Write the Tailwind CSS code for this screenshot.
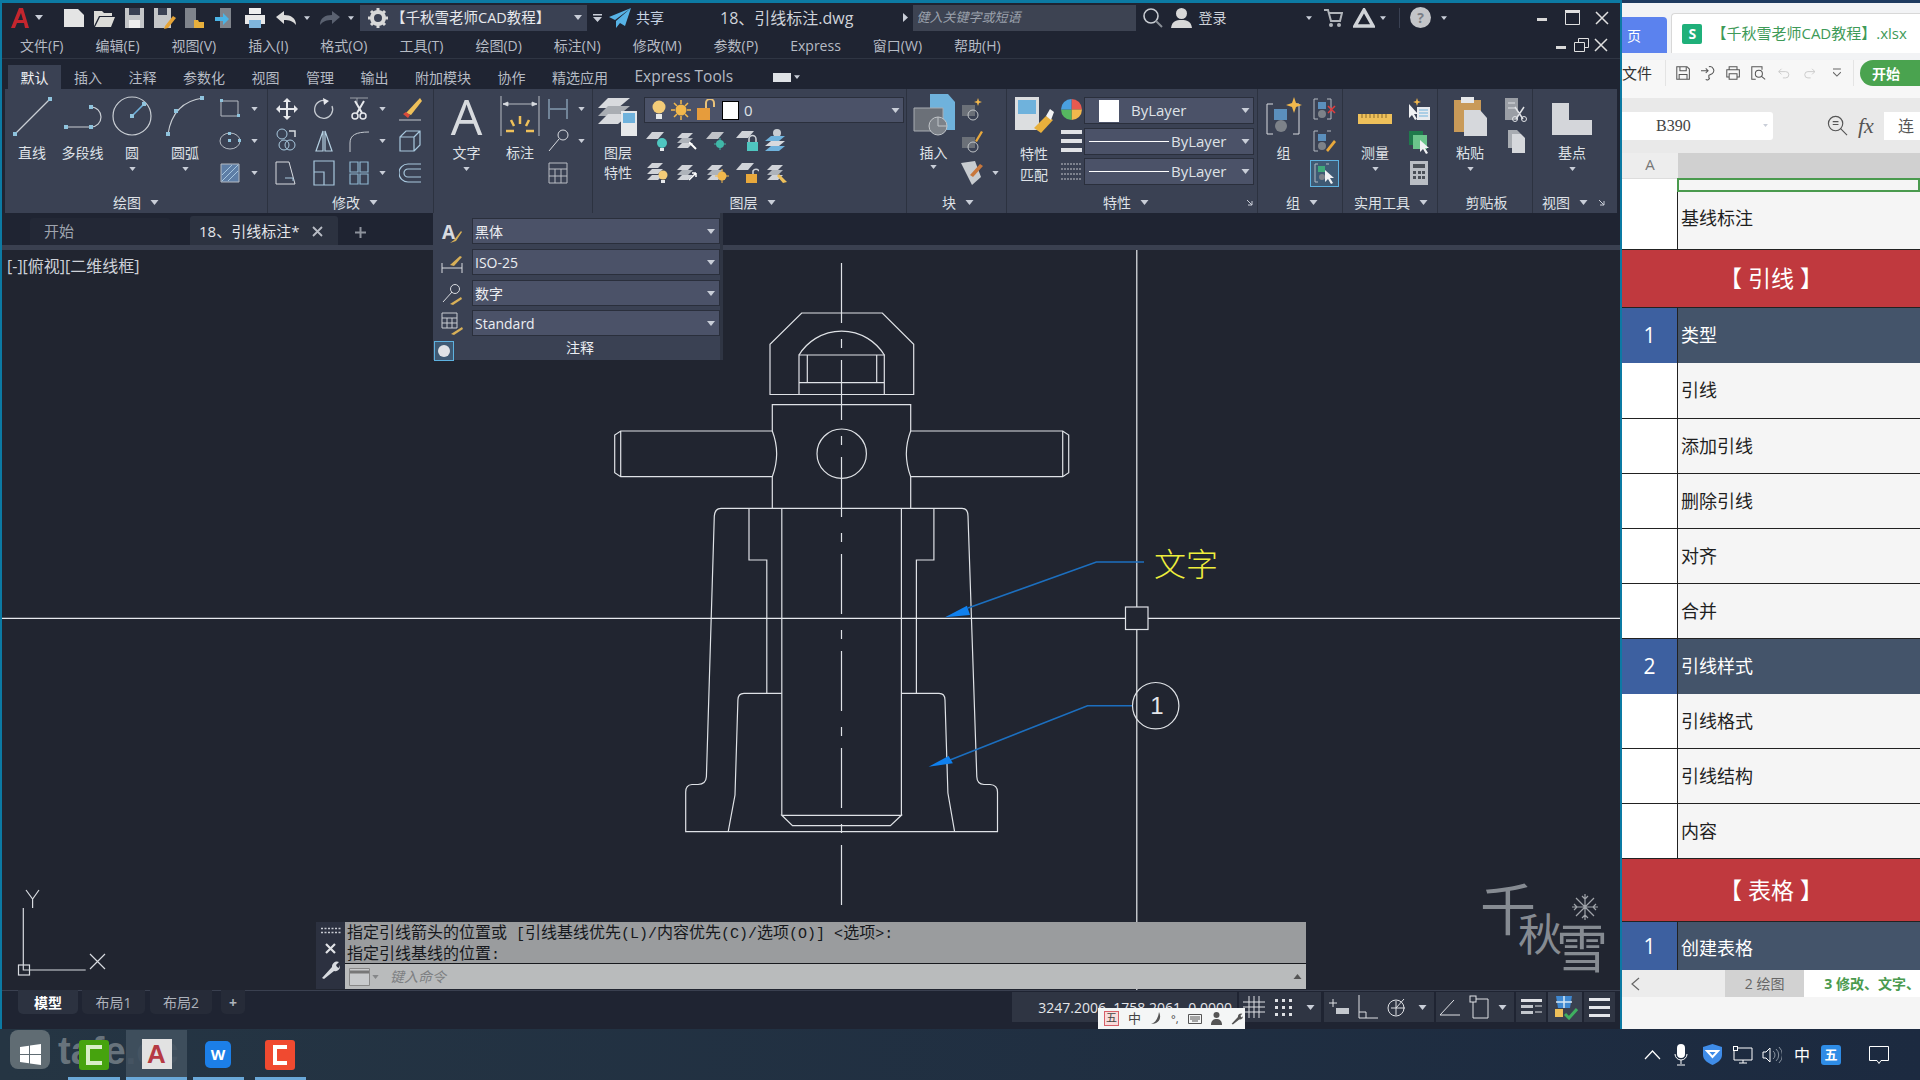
<!DOCTYPE html>
<html lang="zh-CN">
  <head>
    <meta charset="UTF-8" />
    <title>18、引线标注.dwg</title>
    <script src="https://cdn.jsdelivr.net/npm/@tailwindcss/browser@4"></script>
  </head>
  <body class="w-[1920px] h-[1080px] overflow-hidden bg-[#1f2432] [font-family:'Open_Sans','Noto_Sans_CJK_SC',sans-serif]">
    <!-- shared small glyphs -->
    <svg class="hidden">
      <symbol id="tri" viewBox="0 0 8 5"><path d="M0 0h8L4 5z" fill="#c9ced8" /></symbol>
      <symbol id="node" viewBox="0 0 4 4"><rect width="4" height="4" fill="#8fc3dd" /></symbol>
      <symbol id="layers" viewBox="0 0 24 24">
        <path d="M7 5h11l-5 5H2z" fill="#d0d3d8" /><path d="M7 10h11l-5 5H2z" fill="#aeb3ba" /><path d="M7 15h11l-5 5H2z" fill="#d0d3d8" />
      </symbol>
    </svg>

    <div class="flex h-[1029px]">
      <!-- CAD window -->
      <div class="relative w-[1622px] flex flex-col bg-[#1f2432] border-t-[3px] border-x-2 border-[#0c7aa3] text-[#cfd3da]">
        <!-- title row -->
        <div class="h-[29px] flex items-center text-[14px] shrink-0">
          <svg class="w-[20px] h-[22px] ml-[8px]" viewBox="0 0 20 22"><path d="M1 21 9 1h4l6 20h-4l-1-5H7l-2 5zM8 13h5l-2-7z" fill="#c4262e" /></svg>
          <svg class="w-[8px] h-[5px] ml-[5px]"><use href="#tri" /></svg>
          <svg class="w-[22px] h-[20px] ml-[20px]" viewBox="0 0 22 20"><path d="M1 1h14l6 6v12H1z" fill="#e4e4e4" /></svg>
          <svg class="w-[22px] h-[20px] ml-[8px]" viewBox="0 0 22 20"><path d="M1 3h8l2 2h8v3H6L1 18zM7 9h15l-4 10H2z" fill="#dcdcd8" /></svg>
          <svg class="w-[21px] h-[22px] ml-[9px]" viewBox="0 0 21 22"><path d="M1 1h19v20H1z" fill="#c4c6c8" /><path d="M5 1h11v7H5z" fill="#3a4153" /><path d="M5 13h11v8H5z" fill="#eee" /></svg>
          <svg class="w-[23px] h-[22px] ml-[8px]" viewBox="0 0 23 22"><path d="M1 1h17v20H1z" fill="#c4c6c8" /><path d="M5 1h9v7H5z" fill="#3a4153" /><path d="M12 19l8-10 3 2-8 10-4 1z" fill="#e6a436" /></svg>
          <svg class="w-[21px] h-[22px] ml-[8px]" viewBox="0 0 21 22"><path d="M1 1h11v20H1z" fill="#7f848c" /><path d="M10 13h4l1 2h5v6H10z" fill="#e8b03c" /></svg>
          <svg class="w-[21px] h-[22px] ml-[9px]" viewBox="0 0 21 22"><path d="M6 1h11v20H6z" fill="#7f848c" /><path d="M1 10h8V6l6 6-6 6v-4H1z" fill="#4bb4e6" /></svg>
          <svg class="w-[22px] h-[22px] ml-[9px]" viewBox="0 0 22 22"><path d="M5 1h12v6H5z" fill="#eee" /><path d="M1 8h20v9H1z" fill="#e8e8e8" /><path d="M5 13h12v8H5z" fill="#7fb5dc" /></svg>
          <svg class="w-[22px] h-[16px] ml-[9px]" viewBox="0 0 22 16"><path d="M9 1v4c7 0 12 3 12 10-3-4-7-5-12-5v4L1 7z" fill="#dcdcdc" /></svg>
          <svg class="w-[6px] h-[4px] ml-[7px]"><use href="#tri" /></svg>
          <svg class="w-[22px] h-[16px] ml-[9px]" viewBox="0 0 22 16"><path d="M13 1v4C6 5 1 8 1 15c3-4 7-5 12-5v4l8-7z" fill="#5a6170" /></svg>
          <svg class="w-[6px] h-[4px] ml-[7px]"><use href="#tri" /></svg>
          <div class="w-[227px] h-[26px] ml-[6px] flex items-center bg-[#3a4153] text-[#e6e8ec]">
            <svg class="w-[20px] h-[20px] ml-[8px]" viewBox="0 0 20 20"><circle cx="10" cy="10" r="6" fill="none" stroke="#d8d8d8" stroke-width="4" /><path d="M10 0v4M10 16v4M0 10h4M16 10h4M3 3l3 3M14 14l3 3M3 17l3-3M14 6l3-3" stroke="#d8d8d8" stroke-width="3" /></svg>
            <span class="ml-[3px] w-[177px] text-[14.500px] whitespace-nowrap">【千秋雪老师CAD教程】</span>
            <svg class="w-[8px] h-[5px] ml-[6px]"><use href="#tri" /></svg>
          </div>
          <svg class="w-[9px] h-[8px] ml-[6px]" viewBox="0 0 9 8"><path d="M0 0h9v1.500H0zM0 3h9L4.500 8z" fill="#c9ced8" /></svg>
          <svg class="w-[22px] h-[20px] ml-[7px]" viewBox="0 0 22 20"><path d="M22 0 0 9l6 3zM22 0 7 13v7l4-5 5 3z" fill="#57b3e6" /></svg>
          <span class="ml-[5px] text-[#c8d4e4]">共享</span>
          <span class="ml-[56px] text-[16px] whitespace-nowrap">18、引线标注.dwg</span>
          <svg class="w-[5px] h-[9px] ml-[50px]" viewBox="0 0 5 9"><path d="M0 0l5 4.500L0 9z" fill="#c9ced8" /></svg>
          <div class="w-[223px] h-[26px] ml-[5px] flex items-center pl-[3px] bg-[#3d4352] text-[13px] italic text-[#9aa0ab]">健入关键字或短语</div>
          <svg class="w-[21px] h-[21px] ml-[6px]" viewBox="0 0 21 21"><circle cx="9" cy="9" r="7" fill="none" stroke="#c8ccd2" stroke-width="1.600" /><path d="M14 14l6 6" stroke="#8a8f96" stroke-width="2" /></svg>
          <svg class="w-[21px] h-[22px] ml-[8px]" viewBox="0 0 21 22"><circle cx="10.500" cy="6.500" r="5.500" fill="#d8d8d8" /><path d="M0 21c1-7 5-8 10.500-8S20 14 21 21z" fill="#d8d8d8" /></svg>
          <span class="ml-[6px]">登录</span>
          <svg class="w-[6px] h-[4px] ml-[80px]"><use href="#tri" /></svg>
          <svg class="w-[19px] h-[20px] ml-[12px]" viewBox="0 0 19 20"><path d="M0 2h4l3 11h9l2-8H5" fill="none" stroke="#b0b4ba" stroke-width="2" /><circle cx="7" cy="17" r="2" fill="#b0b4ba" /><circle cx="15" cy="17" r="2" fill="#b0b4ba" /></svg>
          <svg class="w-[22px] h-[20px] ml-[10px]" viewBox="0 0 22 20"><path d="M11 2 2 18h18z" fill="none" stroke="#d0d3d8" stroke-width="3.500" /></svg>
          <svg class="w-[6px] h-[4px] ml-[5px]"><use href="#tri" /></svg>
          <div class="w-px h-[20px] ml-[13px] bg-[#3a4153]"></div>
          <svg class="w-[21px] h-[21px] ml-[10px]" viewBox="0 0 21 21"><circle cx="10.500" cy="10.500" r="10.500" fill="#c3c5c8" /><text x="10.500" y="15.500" text-anchor="middle" font-size="14" font-weight="700" fill="#7b7f86">?</text></svg>
          <svg class="w-[6px] h-[4px] ml-[10px]"><use href="#tri" /></svg>
          <svg class="w-[10px] h-[3px] ml-[90px] mt-[4px]" viewBox="0 0 10 3"><rect width="10" height="3" fill="#d8d8d8" /></svg>
          <svg class="w-[15px] h-[15px] ml-[18px]" viewBox="0 0 15 15"><path d="M.5 2.500h14v12H.5z" fill="none" stroke="#e0e0e0" /><rect width="15" height="2.500" fill="#e0e0e0" /></svg>
          <svg class="w-[14px] h-[14px] ml-[15px]" viewBox="0 0 14 14"><path d="M1 1l12 12M13 1 1 13" stroke="#e0e0e0" stroke-width="1.500" /></svg>
        </div>

        <!-- menu row -->
        <div class="h-[27px] flex items-center text-[14px] text-[#b6bbc4] border-b border-[#2f3543] shrink-0">
          <div class="flex gap-[32px] ml-[18px] whitespace-nowrap">
            <span>文件(F)</span><span>编辑(E)</span><span>视图(V)</span><span>插入(I)</span><span>格式(O)</span><span>工具(T)</span><span>绘图(D)</span><span>标注(N)</span><span>修改(M)</span><span>参数(P)</span><span>Express</span><span>窗口(W)</span><span>帮助(H)</span>
          </div>
          <svg class="w-[10px] h-[3px] ml-[555px] mt-[5px]" viewBox="0 0 10 3"><rect width="10" height="3" fill="#d8d8d8" /></svg>
          <svg class="w-[15px] h-[14px] ml-[8px]" viewBox="0 0 15 14"><path d="M.5 4.500h10v9H.5zM4.500 4.500V.5h10v9h-4" fill="none" stroke="#e0e0e0" /></svg>
          <svg class="w-[14px] h-[14px] ml-[5px]" viewBox="0 0 14 14"><path d="M1 1l12 12M13 1 1 13" stroke="#e0e0e0" stroke-width="1.500" /></svg>
        </div>

        <!-- ribbon tabs -->
        <div class="h-[30px] flex items-end text-[14px] text-[#b6bbc4] shrink-0">
          <span class="ml-[6px] h-[24px] w-[53px] flex items-center justify-center bg-[#3a4153] text-[#f0f1f4]">默认</span>
          <div class="flex items-center gap-[26.500px] ml-[13px] h-[24px] whitespace-nowrap">
            <span>插入</span><span>注释</span><span>参数化</span><span>视图</span><span>管理</span><span>输出</span><span>附加模块</span><span>协作</span><span>精选应用</span><span class="text-[15.500px]">Express Tools</span>
          </div>
          <div class="h-[24px] flex items-center ml-[40px] gap-[3px]">
            <div class="w-[18px] h-[9px] bg-[#dfe2e6]"></div>
            <svg class="w-[6px] h-[4px]"><use href="#tri" /></svg>
          </div>
        </div>

        <!-- ribbon -->
        <div class="h-[124px] flex pl-[3px] text-[14px] text-[#dfe2e7] shrink-0">
          <!-- 绘图 -->
          <section class="w-[263px] flex flex-col bg-[#3a4153] border-r border-[#2c3240]">
            <div class="h-[102px] pt-[4px] flex">
              <div class="w-[54px] flex flex-col items-center">
                <svg class="w-[40px] h-[40px] mt-[3px] mb-[7px]" viewBox="0 0 40 40"><path d="M3 38 38 3" stroke="#c9ced4" stroke-width="1.200" /><use href="#node" x="1" y="36" width="4" height="4" /><use href="#node" x="36" y="1" width="4" height="4" /></svg>
                <span class="leading-[20px]">直线</span>
              </div>
              <div class="w-[47px] flex flex-col items-center">
                <svg class="w-[40px] h-[40px] mt-[3px] mb-[7px]" viewBox="0 0 40 40"><path d="M3 31H28A10 10 0 0 0 28 11" fill="none" stroke="#c9ced4" stroke-width="1.200" /><use href="#node" x="1" y="29" width="4" height="4" /><use href="#node" x="26" y="29" width="4" height="4" /><use href="#node" x="26" y="9" width="4" height="4" /></svg>
                <span class="leading-[20px] whitespace-nowrap">多段线</span>
              </div>
              <div class="w-[52px] flex flex-col items-center">
                <svg class="w-[40px] h-[40px] mt-[3px] mb-[7px]" viewBox="0 0 40 40"><circle cx="20" cy="20" r="19" fill="none" stroke="#c9ced4" stroke-width="1.200" /><path d="M20 20 32 8" stroke="#6fb2dc" stroke-width="1.600" /><use href="#node" x="18" y="18" width="4" height="4" /><use href="#node" x="30" y="6" width="4" height="4" /></svg>
                <span class="leading-[20px]">圆</span>
                <svg class="w-[7px] h-[4px] mt-[4px]"><use href="#tri" /></svg>
              </div>
              <div class="w-[54px] flex flex-col items-center">
                <svg class="w-[40px] h-[40px] mt-[3px] mb-[7px]" viewBox="0 0 40 40"><path d="M3 38Q8 6 38 2" fill="none" stroke="#c9ced4" stroke-width="1.200" /><use href="#node" x="1" y="36" width="4" height="4" /><use href="#node" x="9" y="13" width="4" height="4" /><use href="#node" x="35" y="0" width="4" height="4" /></svg>
                <span class="leading-[20px]">圆弧</span>
                <svg class="w-[7px] h-[4px] mt-[4px]"><use href="#tri" /></svg>
              </div>
              <div class="grid grid-cols-[34px_14px] grid-rows-[32px_32px_32px] place-items-center ml-[1px]">
                <svg class="w-[24px] h-[24px]" viewBox="0 0 24 24"><path d="M3 4h17v15H3z" fill="none" stroke="#b4bac2" /><use href="#node" x="2" y="2" width="3" height="3" /><use href="#node" x="19" y="17" width="3" height="3" /></svg>
                <svg class="w-[7px] h-[4px]"><use href="#tri" /></svg>
                <svg class="w-[24px] h-[24px]" viewBox="0 0 24 24"><ellipse cx="12" cy="12" rx="10" ry="8" fill="none" stroke="#b4bac2" /><use href="#node" x="10" y="10" width="3" height="3" /><use href="#node" x="10" y="3" width="3" height="3" /><use href="#node" x="20" y="10" width="3" height="3" /></svg>
                <svg class="w-[7px] h-[4px]"><use href="#tri" /></svg>
                <svg class="w-[24px] h-[24px]" viewBox="0 0 24 24"><path d="M3 3h18v18H3z" fill="#5e7ea6" stroke="#b4bac2" /><path d="M4 14 14 4M4 20 20 4M10 20 20 10" stroke="#a7c6df" /></svg>
                <svg class="w-[7px] h-[4px]"><use href="#tri" /></svg>
              </div>
            </div>
            <div class="h-[22px] flex items-center justify-center gap-[9px]">
              <span>绘图</span><svg class="w-[9px] h-[5px]"><use href="#tri" /></svg>
            </div>
          </section>

          <!-- 修改 -->
          <section class="w-[166px] flex flex-col bg-[#3a4153] border-r border-[#2c3240]">
            <div class="h-[102px] pt-[4px]">
              <div class="grid grid-cols-[37px_38px_32px_15px_40px] grid-rows-[32px_32px_32px] place-items-center">
                <svg class="w-[24px] h-[24px]" viewBox="0 0 24 24"><path d="M12 1l4 4h-3v6h6V8l4 4-4 4v-3h-6v6h3l-4 4-4-4h3v-6H5v3l-4-4 4-4v3h6V5H8z" fill="#e6e8ec" /></svg>
                <svg class="w-[24px] h-[24px]" viewBox="0 0 24 24"><path d="M15 4A9 9 0 1 0 20 9" fill="none" stroke="#c4c9d0" stroke-width="1.300" /><path d="M11 1l6 3-5 4z" fill="#e6e8ec" /></svg>
                <svg class="w-[22px] h-[26px]" viewBox="0 0 22 26"><path d="M2 2h18M9 2v6" stroke="#9aa0a8" /><path d="M7 5l7 12M16 5 9 17" stroke="#e6e8ec" stroke-width="2" /><circle cx="7" cy="20" r="3" fill="none" stroke="#e6e8ec" stroke-width="1.500" /><circle cx="15" cy="20" r="3" fill="none" stroke="#e6e8ec" stroke-width="1.500" /></svg>
                <svg class="w-[7px] h-[4px]"><use href="#tri" /></svg>
                <svg class="w-[24px] h-[24px]" viewBox="0 0 24 24"><path d="M22 1l2 3-11 14-5-2z" fill="#eec05a" /><path d="M5 17l3-2 4 3-2 3z" fill="#d84a3a" /><path d="M1 23h22" stroke="#c4c9d0" /></svg>
                <svg class="w-[24px] h-[26px]" viewBox="0 0 24 26"><circle cx="7" cy="6" r="5" fill="none" stroke="#a8c8de" /><circle cx="9" cy="17" r="5" fill="none" stroke="#a8c8de" /><circle cx="15" cy="17" r="5" fill="none" stroke="#a8c8de" /><path d="M14 3h6v6" fill="none" stroke="#d8dbe0" stroke-width="1.500" /></svg>
                <svg class="w-[20px] h-[24px]" viewBox="0 0 20 24"><path d="M9 2 2 22h7zM11 2l7 20h-7z" fill="none" stroke="#b4d0e2" stroke-width="1.200" /></svg>
                <svg class="w-[22px] h-[24px]" viewBox="0 0 22 24"><path d="M2 23V14C2 6 8 3 21 3" fill="none" stroke="#c4c9d0" /></svg>
                <svg class="w-[7px] h-[4px]"><use href="#tri" /></svg>
                <svg class="w-[22px] h-[24px]" viewBox="0 0 22 24"><path d="M1 8h14v14H1zM1 8l6-6h14v14l-6 6M15 8l6-6" fill="none" stroke="#a8c8de" stroke-width="1.200" /></svg>
                <svg class="w-[24px] h-[26px]" viewBox="0 0 24 26"><path d="M1 2h13l6 22H1z" fill="none" stroke="#d8dbe0" /><path d="M10 18h8v3" fill="none" stroke="#a8c8de" /></svg>
                <svg class="w-[22px] h-[26px]" viewBox="0 0 22 26"><path d="M1 1h20v24H1zM1 12h10v13" fill="none" stroke="#a8c8de" stroke-width="1.200" /></svg>
                <svg class="w-[20px] h-[24px]" viewBox="0 0 20 24"><path d="M1 1h8v10H1zM11 1h8v10h-8zM1 13h8v10H1zM11 13h8v10h-8z" fill="none" stroke="#8eb6d0" stroke-width="1.200" /></svg>
                <svg class="w-[7px] h-[4px]"><use href="#tri" /></svg>
                <svg class="w-[22px] h-[20px]" viewBox="0 0 22 20"><path d="M22 1H9a9 9 0 0 0 0 18h13M22 6H9a4 4 0 0 0 0 8h13" fill="none" stroke="#a8c8de" stroke-width="1.200" /></svg>
              </div>
            </div>
            <div class="h-[22px] flex items-center justify-center gap-[9px] pl-[9px]">
              <span>修改</span><svg class="w-[9px] h-[5px]"><use href="#tri" /></svg>
            </div>
          </section>

          <!-- 注释 -->
          <section class="w-[159px] flex flex-col bg-[#3a4153] border-r border-[#2c3240]">
            <div class="h-[102px] pt-[4px] flex">
              <div class="w-[65px] flex flex-col items-center">
                <span class="h-[40px] mt-[3px] mb-[7px] text-[50px] leading-[40px] text-[#d7dade]">A</span>
                <span class="leading-[20px]">文字</span>
                <svg class="w-[7px] h-[4px] mt-[4px]"><use href="#tri" /></svg>
              </div>
              <div class="w-[42px] flex flex-col items-center">
                <svg class="w-[40px] h-[40px] mt-[3px] mb-[7px]" viewBox="0 0 40 40"><path d="M1 0v40M39 0v40M3 8h34M3 8l5-2v4zM37 8l-5-2v4z" fill="#d8dbe0" stroke="#d8dbe0" stroke-width=".8" /><path d="M20 20v8M11 24l3 6M29 24l-3 6M6 35h8M26 35h8" stroke="#eec05a" stroke-width="2.500" /></svg>
                <span class="leading-[20px]">标注</span>
              </div>
              <div class="grid grid-cols-[33px_15px] grid-rows-[32px_32px_32px] place-items-center">
                <svg class="w-[22px] h-[22px]" viewBox="0 0 22 22"><path d="M2 1v20M20 1v20M3 11h16" stroke="#a8c8de" /></svg>
                <svg class="w-[7px] h-[4px]"><use href="#tri" /></svg>
                <svg class="w-[22px] h-[24px]" viewBox="0 0 22 24"><circle cx="16" cy="6" r="5" fill="none" stroke="#d8dbe0" /><path d="M12 10 2 22" stroke="#d8dbe0" /></svg>
                <svg class="w-[7px] h-[4px]"><use href="#tri" /></svg>
                <svg class="w-[20px] h-[22px]" viewBox="0 0 20 22"><path d="M1 1h18v20H1zM1 7h18M1 14h18M7 7v14M13 7v14" fill="none" stroke="#b9bdc4" /></svg>
              </div>
            </div>
            <div class="h-[22px]"></div>
          </section>

          <!-- 图层 -->
          <section class="w-[314px] flex flex-col bg-[#3a4153] border-r border-[#2c3240]">
            <div class="h-[102px] pt-[4px] flex">
              <div class="w-[50px] flex flex-col items-center">
                <svg class="w-[40px] h-[40px] mt-[3px] mb-[7px]" viewBox="0 0 40 40"><path d="M10 2h22L20 12H0z" fill="#d8dade" /><path d="M10 10h22L20 20H0z" fill="#a9adb3" /><path d="M10 18h22L20 28H0z" fill="#d8dade" /><path d="M23 15h16v25H23z" fill="#e6e8ea" /><path d="M25 17h12v10H25z" fill="#6fb2dc" /></svg>
                <span class="leading-[20px]">图层</span>
                <span class="leading-[20px]">特性</span>
              </div>
              <div class="w-[260px] ml-[1px] pt-[4px]">
                <div class="h-[26px] flex items-center bg-[#4b5268] border border-[#2a2f3c] text-[#dfe2e7]">
                  <svg class="w-[14px] h-[20px] ml-[7px]" viewBox="0 0 14 20"><circle cx="7" cy="7" r="6.500" fill="#f4cc78" /><path d="M4 14h6v5H4z" fill="#e6e8ea" /></svg>
                  <svg class="w-[20px] h-[20px] ml-[5px]" viewBox="0 0 20 20"><circle cx="10" cy="10" r="5.500" fill="#f2b84c" /><path d="M10 0v4M10 16v4M0 10h4M16 10h4M3 3l3 3M14 14l3 3M3 17l3-3M14 6l3-3" stroke="#f2b84c" stroke-width="1.500" /></svg>
                  <svg class="w-[20px] h-[22px] ml-[5px]" viewBox="0 0 20 22"><path d="M1 9h13v12H1z" fill="#e69c3c" /><path d="M10 9V4a4 4 0 0 1 8 0v4" fill="none" stroke="#e9c27a" stroke-width="2" /></svg>
                  <div class="w-[17px] h-[19px] ml-[6px] bg-white border border-black"></div>
                  <span class="ml-[5px] text-[15px]">0</span>
                  <svg class="w-[9px] h-[5px] ml-auto mr-[3px]"><use href="#tri" /></svg>
                </div>
                <div class="grid grid-cols-[30px_30px_30px_30px_30px] grid-rows-[32px_32px] place-items-center ml-[-2px] mt-[1px]">
                  <svg class="w-[24px] h-[24px]" viewBox="0 0 24 24"><path d="M7 4h12l-6 7H1z" fill="#d0d3d8" /><circle cx="17" cy="15" r="5" fill="#4fc6c0" /><path d="M15 20h4v3h-4z" fill="#e6e8ea" /></svg>
                  <svg class="w-[24px] h-[24px]"><use href="#layers" /><path d="M14 14l7 7" stroke="#fff" stroke-width="2" /></svg>
                  <svg class="w-[24px] h-[24px]" viewBox="0 0 24 24"><path d="M7 4h12l-6 7H1z" fill="#c0c3c8" /><circle cx="15" cy="16" r="4" fill="#40b8a8" /><path d="M15 10v12M9 16h12" stroke="#40b8a8" /></svg>
                  <svg class="w-[24px] h-[24px]" viewBox="0 0 24 24"><path d="M7 3h12l-6 7H1z" fill="#d0d3d8" /><path d="M12 14h11v9H12z" fill="#4fc6c0" /><path d="M14 14v-3a3.500 3.500 0 0 1 7 0v3" fill="none" stroke="#cfd3d8" stroke-width="1.500" /></svg>
                  <svg class="w-[24px] h-[24px]" viewBox="0 0 24 24"><circle cx="12" cy="5" r="4" fill="#c8ccd2" /><path d="M6 8h14l-6 5H0z" fill="#6fb2dc" /><path d="M6 13h14l-6 5H0z" fill="#d8dade" /><path d="M6 18h14l-6 5H0z" fill="#6fb2dc" /></svg>
                  <svg class="w-[24px] h-[24px]" viewBox="0 0 24 24"><path d="M7 3h11l-5 5H2zM7 9h11l-5 5H2zM7 15h11l-5 5H2z" fill="#d0d3d8" /><circle cx="18" cy="15" r="4.500" fill="#f4cc78" /><path d="M16 20h4v3h-4z" fill="#e6e8ea" /></svg>
                  <svg class="w-[24px] h-[24px]"><use href="#layers" /><path d="M14 20l7-7M21 13v4M21 13h-4" stroke="#fff" stroke-width="1.500" /></svg>
                  <svg class="w-[24px] h-[24px]"><use href="#layers" /><circle cx="17" cy="16" r="4.500" fill="#f2b84c" /><path d="M17 9v14M10 16h14" stroke="#f2b84c" /></svg>
                  <svg class="w-[24px] h-[24px]" viewBox="0 0 24 24"><path d="M7 3h12l-6 7H1z" fill="#d0d3d8" /><path d="M11 14h11v9H11z" fill="#e8a83c" /><path d="M18 14v-3a3.500 3.500 0 0 1 6 0" fill="none" stroke="#cfd3d8" stroke-width="1.500" /></svg>
                  <svg class="w-[24px] h-[24px]"><use href="#layers" /><path d="M14 14l8 8-4 1-6-7z" fill="#eec05a" /></svg>
                </div>
              </div>
            </div>
            <div class="h-[22px] flex items-center justify-center gap-[9px] pl-[6px]">
              <span>图层</span><svg class="w-[9px] h-[5px]"><use href="#tri" /></svg>
            </div>
          </section>

          <!-- 块 -->
          <section class="w-[100px] flex flex-col bg-[#3a4153] border-r border-[#2c3240]">
            <div class="h-[102px] pt-[4px] flex">
              <div class="w-[54px] flex flex-col items-center">
                <svg class="w-[42px] h-[42px] mt-[1px] mb-[7px]" viewBox="0 0 42 42"><path d="M17 0h18l7 8v28H17z" fill="#6fb2dc" /><path d="M1 14h29v23H1z" fill="#6b7078" stroke="#a8acb2" /><circle cx="25" cy="32" r="9" fill="#7d8289" stroke="#c0c4c8" /><path d="M25 23v9h9" stroke="#c0c4c8" fill="none" /></svg>
                <span class="leading-[20px]">插入</span>
                <svg class="w-[7px] h-[4px] mt-[2px]"><use href="#tri" /></svg>
              </div>
              <div class="grid grid-cols-[24px_22px] grid-rows-[32px_32px_32px] place-items-center">
                <svg class="w-[22px] h-[24px]" viewBox="0 0 22 24"><path d="M1 8h13v11H1z" fill="#6b7078" /><circle cx="12" cy="18" r="5" fill="none" stroke="#c0c4c8" /><path d="M17 1l1 3 3 1-3 1-1 3-1-3-3-1 3-1z" fill="#f2b84c" /></svg>
                <span></span>
                <svg class="w-[22px] h-[24px]" viewBox="0 0 22 24"><path d="M1 8h13v11H1z" fill="#6b7078" /><circle cx="12" cy="18" r="5" fill="none" stroke="#c0c4c8" /><path d="M14 12 20 2l2 1-6 10z" fill="#e8a83c" /></svg>
                <span></span>
                <svg class="w-[24px] h-[26px]" viewBox="0 0 24 26"><path d="M1 3 15 1l6 16-9 8z" fill="#c8ccd0" /><path d="M10 15l10-11 3 2-10 11z" fill="#c8773c" /></svg>
                <svg class="w-[7px] h-[4px]"><use href="#tri" /></svg>
              </div>
            </div>
            <div class="h-[22px] flex items-center justify-center gap-[9px] pl-[3px]">
              <span>块</span><svg class="w-[9px] h-[5px]"><use href="#tri" /></svg>
            </div>
          </section>

          <!-- 特性 -->
          <section class="relative w-[251px] flex flex-col bg-[#3a4153] border-r border-[#2c3240]">
            <div class="h-[102px] pt-[4px] flex">
              <div class="w-[54px] flex flex-col items-center">
                <svg class="w-[40px] h-[40px] mt-[3px] mb-[7px]" viewBox="0 0 40 40"><path d="M1 1h24v33H1z" fill="#dcdee0" /><path d="M4 4h18v14H4z" fill="#6fb2dc" /><path d="M20 32 32 20l7 4-12 13z" fill="#e8b03c" /><path d="M32 20l4-7 4 3-3 8z" fill="#f2f3f4" /></svg>
                <span class="leading-[21px]">特性</span>
                <span class="leading-[21px]">匹配</span>
              </div>
              <div class="w-[21px] grid grid-rows-[32px_32px_32px] place-items-center">
                <svg class="w-[21px] h-[21px]" viewBox="0 0 21 21"><path d="M10.500 10.500V0A10.500 10.500 0 0 1 21 10.500z" fill="#e85a50" /><path d="M10.500 10.500H21A10.500 10.500 0 0 1 10.500 21z" fill="#f2b84c" /><path d="M10.500 10.500V21A10.500 10.500 0 0 1 0 10.500z" fill="#56b860" /><path d="M10.500 10.500H0A10.500 10.500 0 0 1 10.500 0z" fill="#4aa0e0" /></svg>
                <svg class="w-[21px] h-[24px]" viewBox="0 0 21 24"><path d="M0 1h21v4H0zM0 10h21v4H0zM0 19h21v4H0z" fill="#e0e2e6" /></svg>
                <svg class="w-[21px] h-[22px]" viewBox="0 0 21 22"><path d="M0 2h21M0 7h21M0 12h21M0 17h21" stroke="#bfc3c9" stroke-dasharray="2 1" /></svg>
              </div>
              <div class="w-[170px] ml-[2px] pt-[4px] text-[15px]">
                <div class="h-[27px] flex items-center bg-[#4b5268] border border-[#2a2f3c]">
                  <div class="w-[20px] h-[22px] ml-[14px] bg-white"></div>
                  <span class="ml-[12px]">ByLayer</span>
                  <svg class="w-[9px] h-[5px] ml-auto mr-[3px]"><use href="#tri" /></svg>
                </div>
                <div class="h-[27px] mt-[4px] flex items-center bg-[#4b5268] border border-[#2a2f3c]">
                  <div class="w-[80px] h-px ml-[4px] bg-white"></div>
                  <span class="ml-[2px]">ByLayer</span>
                  <svg class="w-[9px] h-[5px] ml-auto mr-[3px]"><use href="#tri" /></svg>
                </div>
                <div class="h-[27px] mt-[3px] flex items-center bg-[#4b5268] border border-[#2a2f3c]">
                  <div class="w-[80px] h-px ml-[4px] bg-white"></div>
                  <span class="ml-[2px]">ByLayer</span>
                  <svg class="w-[9px] h-[5px] ml-auto mr-[3px]"><use href="#tri" /></svg>
                </div>
              </div>
            </div>
            <div class="h-[22px] flex items-center justify-center gap-[9px] pr-[12px]">
              <span>特性</span><svg class="w-[9px] h-[5px]"><use href="#tri" /></svg>
            </div>
            <svg class="absolute right-[4px] bottom-[7px] w-[7px] h-[7px]" viewBox="0 0 7 7"><path d="M1 1l5 5M6 2v4H2" fill="none" stroke="#c9ced8" /></svg>
          </section>

          <!-- 组 -->
          <section class="w-[85px] flex flex-col bg-[#3a4153] border-r border-[#2c3240]">
            <div class="h-[102px] pt-[4px] flex">
              <div class="w-[51px] flex flex-col items-center">
                <svg class="w-[40px] h-[40px] mt-[3px] mb-[7px]" viewBox="0 0 40 40"><path d="M9 8H3v30h6M29 8h6v30h-6" fill="none" stroke="#d8dbe0" /><path d="M10 13h13v11H10z" fill="#5b8fbc" /><circle cx="17" cy="30" r="6" fill="#7d8289" /><path d="M30 1l2 6 6 2-6 2-2 6-2-6-6-2 6-2z" fill="#f2b84c" /></svg>
                <span class="leading-[20px]">组</span>
              </div>
              <div class="w-[30px] grid grid-rows-[32px_32px_32px] place-items-center">
                <svg class="w-[24px] h-[24px]" viewBox="0 0 24 24"><path d="M6 2H2v20h4M15 2h4v20h-4" fill="none" stroke="#b4bac2" /><path d="M6 5h8v7H6z" fill="#5b8fbc" /><circle cx="10" cy="17" r="4" fill="#7d8289" /><path d="M16 9l7 7M23 9l-7 7" stroke="#e23c3c" stroke-width="1.500" /></svg>
                <svg class="w-[24px] h-[24px]" viewBox="0 0 24 24"><path d="M6 2H2v20h4M15 2h4" fill="none" stroke="#b4bac2" /><path d="M6 5h8v7H6z" fill="#5b8fbc" /><circle cx="10" cy="17" r="4" fill="#7d8289" /><path d="M14 21l8-10 2 2-8 10z" fill="#e8a83c" /></svg>
                <div class="w-[29px] h-[27px] flex items-center justify-center bg-[#3f5a74] border border-[#5eb2e0]">
                  <svg class="w-[22px] h-[22px]" viewBox="0 0 22 22"><path d="M5 2H2v18h3M13 2h3" fill="none" stroke="#b4bac2" /><path d="M5 4h7v6H5z" fill="#3fa87a" /><circle cx="9" cy="15" r="3" fill="#7d8289" /><path d="M12 8v12l3-3 3 5 2-1-3-5h4z" fill="#f0f1f3" /></svg>
                </div>
              </div>
            </div>
            <div class="h-[22px] flex items-center justify-center gap-[9px] pl-[4px]">
              <span>组</span><svg class="w-[9px] h-[5px]"><use href="#tri" /></svg>
            </div>
          </section>

          <!-- 实用工具 -->
          <section class="w-[95px] flex flex-col bg-[#3a4153] border-r border-[#2c3240]">
            <div class="h-[102px] pt-[4px] flex">
              <div class="w-[64px] flex flex-col items-center">
                <svg class="w-[36px] h-[40px] mt-[3px] mb-[7px]" viewBox="0 0 36 40"><path d="M1 18h34v10H1z" fill="#eec05a" /><path d="M5 18v4M9 18v4M13 18v4M17 18v4M21 18v4M25 18v4M29 18v4" stroke="#8a6a2a" /></svg>
                <span class="leading-[20px]">测量</span>
                <svg class="w-[7px] h-[4px] mt-[4px]"><use href="#tri" /></svg>
              </div>
              <div class="w-[24px] grid grid-rows-[32px_32px_32px] place-items-center">
                <svg class="w-[22px] h-[24px]" viewBox="0 0 22 24"><path d="M9 10h13v13H9z" fill="#e8eaee" /><path d="M11 13h9M11 16h9M11 19h9" stroke="#6fb2dc" /><path d="M1 7v14l3-3 3 5 2-1-3-5h4z" fill="#f0f1f3" /><path d="M9 1l1 3 3 1-3 1-1 3-1-3-3-1 3-1z" fill="#f2b84c" /></svg>
                <svg class="w-[22px] h-[26px]" viewBox="0 0 22 26"><path d="M1 3h14v14H1z" fill="#1f7a4c" /><path d="M5 7h14v14H5z" fill="#6cc48c" /><path d="M12 12v12l3-3 3 5 2-1-3-5h4z" fill="#f0f1f3" /></svg>
                <svg class="w-[18px] h-[24px]" viewBox="0 0 18 24"><path d="M0 0h18v24H0z" fill="#b9bdc4" /><path d="M3 3h12v4H3zM3 10h3v3H3zM8 10h3v3H8zM12 10h3v3h-3zM3 15h3v3H3zM8 15h3v3H8zM12 15h3v3h-3z" fill="#4a4f58" /></svg>
              </div>
            </div>
            <div class="h-[22px] flex items-center justify-center gap-[9px] pl-[2px]">
              <span class="whitespace-nowrap">实用工具</span><svg class="w-[9px] h-[5px]"><use href="#tri" /></svg>
            </div>
          </section>

          <!-- 剪贴板 -->
          <section class="w-[95px] flex flex-col bg-[#3a4153] border-r border-[#2c3240]">
            <div class="h-[102px] pt-[4px] flex">
              <div class="w-[64px] flex flex-col items-center">
                <svg class="w-[36px] h-[40px] mt-[3px] mb-[7px]" viewBox="0 0 36 40"><path d="M2 4h27v32H2z" fill="#c99a58" /><path d="M9 1h13v6H9z" fill="#e6e8ea" /><path d="M12 14h16l7 8v18H12z" fill="#d6d8dc" /></svg>
                <span class="leading-[20px]">粘贴</span>
                <svg class="w-[7px] h-[4px] mt-[4px]"><use href="#tri" /></svg>
              </div>
              <div class="w-[28px] grid grid-rows-[34px_28px] place-items-center">
                <svg class="w-[24px] h-[26px]" viewBox="0 0 24 26"><path d="M1 1h13v22H1z" fill="#9a9ea5" /><path d="M4 6h7M4 11h7" stroke="#e0e2e6" /><path d="M11 10l8 12M20 10l-8 12" stroke="#e0e2e6" stroke-width="1.500" /><circle cx="11" cy="22" r="2.500" fill="none" stroke="#e0e2e6" /><circle cx="20" cy="22" r="2.500" fill="none" stroke="#e0e2e6" /></svg>
                <svg class="w-[18px] h-[24px]" viewBox="0 0 18 24"><path d="M1 1h9l4 4v14H1z" fill="#a8acb2" /><path d="M5 5h9l4 4v15H5z" fill="#d6d8dc" /></svg>
              </div>
            </div>
            <div class="h-[22px] flex items-center justify-center pl-[3px]">
              <span>剪贴板</span>
            </div>
          </section>

          <!-- 视图 -->
          <section class="relative w-[84px] flex flex-col bg-[#3a4153]">
            <div class="h-[102px] pt-[4px] flex flex-col items-center pr-[6px]">
              <svg class="w-[42px] h-[40px] mt-[3px] mb-[7px]" viewBox="0 0 42 40"><path d="M1 7h17v17h23v15H1z" fill="#d4d6da" /></svg>
              <span class="leading-[20px]">基点</span>
              <svg class="w-[7px] h-[4px] mt-[4px]"><use href="#tri" /></svg>
            </div>
            <div class="h-[22px] flex items-center gap-[9px] pl-[9px]">
              <span>视图</span><svg class="w-[9px] h-[5px]"><use href="#tri" /></svg>
            </div>
            <svg class="absolute right-[12px] bottom-[7px] w-[7px] h-[7px]" viewBox="0 0 7 7"><path d="M1 1l5 5M6 2v4H2" fill="none" stroke="#c9ced8" /></svg>
          </section>
        </div>

        <!-- document tabs -->
        <div class="h-[32px] flex items-end text-[15px] shrink-0">
          <div class="ml-[28px] w-[140px] h-[27px] pl-[14px] flex items-center bg-[#232836] text-[#9ea4ae] rounded-t-[3px]">开始</div>
          <div class="ml-[20px] w-[148px] h-[29px] pl-[9px] pt-[2px] flex items-center bg-[#2c3240] text-[#e4e6ea] rounded-t-[3px] whitespace-nowrap">
            <span>18、引线标注*</span>
            <svg class="w-[11px] h-[11px] ml-[13px]" viewBox="0 0 11 11"><path d="M1 1l9 9M10 1l-9 9" stroke="#b8bcc4" stroke-width="1.800" /></svg>
          </div>
          <svg class="w-[11px] h-[11px] ml-[17px] mb-[7px]" viewBox="0 0 11 11"><path d="M5.500 0v11M0 5.500h11" stroke="#8d929c" stroke-width="2" /></svg>
        </div>
        <div class="h-[5px] bg-[#3a4050] shrink-0"></div>

        <!-- viewport -->
        <div class="relative flex-1 bg-[#212530]">
          <span class="absolute left-[5px] top-[4px] text-[16px] text-[#cdd1d8]">[-][俯视][二维线框]</span>
          <svg class="absolute left-0 top-0 w-[1618px] h-[740px]" viewBox="2 250 1618 740" fill="none" stroke="#dfe2e6" stroke-width="1.200">
            <!-- center line -->
            <path d="M841.500 263V910" stroke-dasharray="60 16 9 12" />
            <!-- head -->
            <path d="M770 394.500V344.300L801.700 313H882.300L913.700 344.300V394.500ZM799 394.500V355H884.300V394.500M799 382.700H884.300M807.300 355V382.700M876.700 355V382.700" />
            <path d="M799 355A50 50 0 0 1 884.300 355" />
            <!-- block and arms -->
            <path d="M772.300 508.300V476.700Q781 453.500 772.300 431V404.700H910.700V431Q902 453.500 910.700 476.700V508.300" />
            <path d="M772.300 431H620.700L614.700 435V472.700L620.700 476.700H772.300M620.700 431V476.700" />
            <path d="M910.700 431H1062.700L1068.700 435V472.700L1062.700 476.700H910.700M1062.700 431V476.700" />
            <circle cx="841.700" cy="453.700" r="24.700" />
            <!-- body -->
            <path d="M714.300 516Q715 508.300 721 508.300H962Q968 508.300 968 516L976.800 776.700Q977 784 984 784.500H990Q997.500 785 997.500 792V831.700H685.700V792Q685.700 785 692 784.500H698Q706 784 706.400 776.700L714.300 516" />
            <path d="M749 508.300V560H766.800V693.300M781.800 508.300V815.300M901.400 508.300V815.300M933.900 508.300V560H916.400V693.300" />
            <path d="M781.800 693.300H744Q738 693.300 737.900 700L735 795L728.200 831.700M901.400 693.300H939Q945 693.300 945 700L947.900 793L954.600 831.700" />
            <path d="M781.800 815.300 792.500 825.700H890.400L901.400 815.300ZM781.800 815.300H901.400" />
            <!-- crosshair -->
            <path d="M2 618.300H1125.500M1148 618.300H1620M1136.800 250V607M1136.800 630V990" stroke="#e8eaee" />
            <rect x="1125.500" y="607" width="22.500" height="22.500" />
            <!-- leaders -->
            <path d="M1144 562H1096.400L968 608" stroke="#1c6fbf" stroke-width="1.600" />
            <path d="M945 617.300 967 605.700 970 615Z" fill="#0f80ee" stroke="none" />
            <path d="M1132.500 705.700H1087.500L950 760" stroke="#1c6fbf" stroke-width="1.600" />
            <path d="M928.600 766.700 948.600 756 952.900 763.300Z" fill="#0f80ee" stroke="none" />
            <circle cx="1155.700" cy="705.700" r="23.200" />
            <!-- ucs -->
            <path d="M23.300 908V970H85.700" stroke="#d8dbe0" />
            <rect x="18.500" y="965" width="11" height="10" stroke="#d8dbe0" />
            <path d="M26 890 32.600 899 39 890M32.600 899V908" stroke="#d8dbe0" />
            <path d="M90 954 105 969M105 954 90 969" stroke="#d8dbe0" />
          </svg>
          <span class="absolute left-[1152px] top-[294px] text-[32px] leading-[40px] font-light text-[#eeee3c]">文字</span>
          <span class="absolute left-[1143px] top-[440px] w-[24px] text-center text-[24px] leading-[32px] text-[#e4e6ea] [font-family:'Liberation_Sans',sans-serif]">1</span>

          <!-- watermark -->
          <div class="absolute left-[1478px] top-[632px] w-[128px] h-[96px] text-[#868b92]">
            <span class="absolute left-0 top-[-6px] text-[56px] leading-[64px]">千</span>
            <span class="absolute left-[38px] top-[26px] text-[44px] leading-[52px]">秋</span>
            <span class="absolute left-[76px] top-[36px] text-[52px] leading-[60px]">雪</span>
            <svg class="absolute left-[92px] top-[12px] w-[26px] h-[26px]" viewBox="0 0 26 26" stroke="#a0a4aa" stroke-width="1.200"><path d="M13 0v26M0 13h26M4 4l18 18M22 4 4 22M13 5l-3-3M13 5l3-3M13 21l-3 3M13 21l3 3M5 13 2 10M5 13l-3 3M21 13l3-3M21 13l3 3" /></svg>
          </div>
        </div>

        <!-- status bar -->
        <div class="h-[39px] flex items-start border-t border-[#3a4050] text-[14px] shrink-0">
          <div class="flex mt-[-1px] ml-[16px] text-[#aeb3bc]">
            <span class="w-[60px] h-[24px] flex items-center justify-center bg-[#2c3240] text-white font-semibold rounded-b-[5px]">模型</span>
            <span class="w-[63px] h-[24px] flex items-center justify-center ml-[4px] bg-[#262b38] rounded-b-[5px]">布局1</span>
            <span class="w-[62px] h-[24px] flex items-center justify-center ml-[5px] bg-[#262b38] rounded-b-[5px]">布局2</span>
            <span class="w-[24px] h-[24px] flex items-center justify-center ml-[9px] bg-[#262b38] rounded-b-[5px] font-bold">+</span>
          </div>
          <div class="ml-[767px] mt-[1px] w-[225px] h-[30px] flex items-center justify-end pr-[5px] bg-[#2f3543] text-[14px] text-[#e4e6ea] whitespace-nowrap overflow-hidden">3247.2006, 1758.2061, 0.0000</div>
          <div class="ml-[2px] mt-[1px] h-[30px] flex items-center bg-[#2f3543] text-white">
            <svg class="w-[22px] h-[22px] ml-[4px]" viewBox="0 0 22 22"><path d="M6 0v22M11 0v22M16 0v22M0 6h22M0 11h22M0 16h22" stroke="#e0e2e6" /></svg>
            <svg class="w-[17px] h-[17px] ml-[10px]" viewBox="0 0 17 17"><g fill="#dfe1e5"><rect width="3" height="3" /><rect x="7" width="3" height="3" /><rect x="14" width="3" height="3" /><rect y="7" width="3" height="3" /><rect x="7" y="7" width="3" height="3" /><rect x="14" y="7" width="3" height="3" /><rect y="14" width="3" height="3" /><rect x="7" y="14" width="3" height="3" /><rect x="14" y="14" width="3" height="3" /></g></svg>
            <svg class="w-[9px] h-[5px] ml-[14px] mr-[6px]"><use href="#tri" /></svg>
          </div>
          <div class="ml-[3px] mt-[1px] w-[110px] h-[30px] flex items-center bg-[#2f3543]">
            <svg class="w-[20px] h-[18px] ml-[5px]" viewBox="0 0 20 18"><path d="M4 1v8M0 5h8" stroke="#dfe1e5" /><rect x="7" y="10" width="13" height="6" fill="#c4c8ce" /></svg>
            <svg class="w-[20px] h-[24px] ml-[9px]" viewBox="0 0 20 24"><path d="M1 0v23h19M1 17h7v6" fill="none" stroke="#dfe1e5" /></svg>
            <svg class="w-[20px] h-[20px] ml-[9px]" viewBox="0 0 20 20"><circle cx="9" cy="11" r="8" fill="none" stroke="#dfe1e5" /><path d="M4 11h14M17 2 9 11M9 4v14" stroke="#dfe1e5" /></svg>
            <svg class="w-[9px] h-[5px] ml-[11px]"><use href="#tri" /></svg>
          </div>
          <div class="ml-[2px] mt-[1px] w-[78px] h-[30px] flex items-center bg-[#2f3543]">
            <svg class="w-[20px] h-[18px] ml-[4px]" viewBox="0 0 20 18"><path d="M0 17h20M0 17 14 2" stroke="#dfe1e5" /></svg>
            <svg class="w-[20px] h-[24px] ml-[9px]" viewBox="0 0 20 24"><path d="M4 4h15v19H4z" fill="none" stroke="#dfe1e5" /><rect x="1" y="1" width="6" height="6" fill="#2f3543" stroke="#dfe1e5" /></svg>
            <svg class="w-[9px] h-[5px] ml-[9px]"><use href="#tri" /></svg>
          </div>
          <div class="ml-[2px] mt-[1px] w-[30px] h-[30px] flex items-center justify-center bg-[#2f3543]">
            <svg class="w-[21px] h-[18px]" viewBox="0 0 21 18"><path d="M0 1h21v3H0z" fill="#dfe1e5" /><path d="M0 7h12v3H0zM0 13h12v3H0z" fill="#c4c8ce" /><path d="M14 8h7M14 14h7" stroke="#dfe1e5" /></svg>
          </div>
          <div class="ml-[2px] mt-[1px] w-[34px] h-[30px] flex items-center justify-center bg-[#3a4150]">
            <svg class="w-[26px] h-[26px]" viewBox="0 0 26 26"><path d="M4 2h16l-2 12H6z" fill="#3f88d0" /><path d="M12 2v12M4 8h16" stroke="#d8e8f4" stroke-width="1.500" /><rect x="3" y="15" width="8" height="8" fill="#eec05a" /><path d="M13 20l4 4 8-9" fill="none" stroke="#3fb060" stroke-width="3" /></svg>
          </div>
          <div class="ml-[2px] mt-[1px] w-[31px] h-[30px] flex items-center justify-center bg-[#2f3543]">
            <svg class="w-[21px] h-[19px]" viewBox="0 0 21 19"><path d="M0 0h21v3H0zM0 8h21v3H0zM0 16h21v3H0z" fill="#e4e6ea" /></svg>
          </div>
        </div>

        <!-- annotation panel opened over the drawing -->
        <div class="absolute left-[431px] top-[210px] w-[290px] h-[147px] pl-[39px] pt-[5px] bg-[#3a4153] border-r-[3px] border-[#2f3543] text-[14px] text-[#eceef2] z-10">
          <div class="h-[26px] w-[248px] flex items-center pl-[2px] bg-[#4b5268] border border-[#2a2f3c]">黑体<svg class="w-[10px] h-[5px] ml-auto mr-[3px]"><use href="#tri" /></svg></div>
          <div class="h-[26px] w-[248px] mt-[5px] flex items-center pl-[2px] bg-[#4b5268] border border-[#2a2f3c]">ISO-25<svg class="w-[10px] h-[5px] ml-auto mr-[3px]"><use href="#tri" /></svg></div>
          <div class="h-[26px] w-[248px] mt-[5px] flex items-center pl-[2px] bg-[#4b5268] border border-[#2a2f3c]">数字<svg class="w-[10px] h-[5px] ml-auto mr-[3px]"><use href="#tri" /></svg></div>
          <div class="h-[26px] w-[248px] mt-[4px] flex items-center pl-[2px] bg-[#4b5268] border border-[#2a2f3c]">Standard<svg class="w-[10px] h-[5px] ml-auto mr-[3px]"><use href="#tri" /></svg></div>
          <div class="h-[23px] flex items-center justify-center pr-[32px]">注释</div>
          <span class="absolute left-[9px] top-[8px] text-[19px] leading-[22px] font-bold text-[#d8dbe0]">A</span>
          <svg class="absolute left-[8px] top-[9px] w-[22px] h-[22px]" viewBox="0 0 22 22"><path d="M9 21l4-3 7-9 1 1-6 9z" fill="#d8b058" /></svg>
          <svg class="absolute left-[8px] top-[39px] w-[22px] h-[22px]" viewBox="0 0 22 22"><path d="M1 11v10M21 11v10M1 16h20" stroke="#d8dbe0" /><path d="M9 13l10-9 2 1-8 9z" fill="#d8b058" /></svg>
          <svg class="absolute left-[8px] top-[70px] w-[22px] h-[22px]" viewBox="0 0 22 22"><circle cx="14" cy="6" r="4.500" fill="none" stroke="#d8dbe0" /><path d="M11 9 2 19" stroke="#d8dbe0" /><path d="M9 21l11-7 1 2-9 6z" fill="#d8b058" /></svg>
          <svg class="absolute left-[8px] top-[99px] w-[22px] h-[24px]" viewBox="0 0 22 24"><path d="M1 1h15v15H1zM1 6h15M1 11h15M6 6v10M11 6v10" fill="none" stroke="#c8ccd2" /><path d="M10 22l11-7 1 2-9 6z" fill="#d8b058" /></svg>
          <div class="absolute left-[1px] top-[128px] w-[20px] h-[20px] flex items-center justify-center bg-[#3f5a74] border border-[#5eb2e0]">
            <div class="w-[12px] h-[12px] rounded-full bg-[#dfe2e6]"></div>
          </div>
        </div>

        <!-- command line -->
        <div class="absolute left-[314px] top-[919px] w-[990px] h-[67px] flex z-10">
          <div class="w-[29px] flex flex-col items-center bg-[#2c3140]">
            <svg class="w-[20px] h-[7px] mt-[5px]" viewBox="0 0 20 7"><path d="M0 1.500h20M0 5.500h20" stroke="#c8ccd2" stroke-width="1.500" stroke-dasharray="2 1.500" /></svg>
            <svg class="w-[11px] h-[11px] mt-[9px]" viewBox="0 0 11 11"><path d="M1 1l9 9M10 1l-9 9" stroke="#e0e2e6" stroke-width="2.200" /></svg>
            <svg class="w-[19px] h-[19px] mt-[6px]" viewBox="0 0 19 19"><path d="M1 18 11 7a5 5 0 0 1 7-5l-3 3 1 2 2 1 1-3a5 5 0 0 1-6 6L3 19z" fill="#d8dbe0" /></svg>
          </div>
          <div class="flex-1 flex flex-col">
            <div class="h-[41px] pl-[2px] pt-[1px] bg-[#9a9c9e] text-[#16181c] text-[16px] leading-[19px] whitespace-nowrap">
              <div>指定引线箭头的位置或<span class="font-['Liberation_Mono'] text-[15px]"> [</span>引线基线优先<span class="font-['Liberation_Mono'] text-[15px]">(L)/</span>内容优先<span class="font-['Liberation_Mono'] text-[15px]">(C)/</span>选项<span class="font-['Liberation_Mono'] text-[15px]">(O)] &lt;</span>选项<span class="font-['Liberation_Mono'] text-[15px]">&gt;:</span></div>
              <div>指定引线基线的位置<span class="font-['Liberation_Mono'] text-[15px]">:</span></div>
            </div>
            <div class="h-[26px] flex items-center bg-[#b9bbbc] border-t border-[#17191d]">
              <svg class="w-[21px] h-[18px] ml-[4px]" viewBox="0 0 21 18"><path d="M.5.5h20v17H.5z" fill="#c8cacc" stroke="#888" /><path d="M1 4h19" stroke="#777" stroke-width="3" /></svg>
              <svg class="w-[7px] h-[4px] ml-[2px]" viewBox="0 0 8 5"><path d="M0 0h8L4 5z" fill="#858789" /></svg>
              <span class="ml-[11px] text-[14px] italic text-[#7d7f82]">键入命令</span>
              <svg class="w-[9px] h-[5px] ml-auto mr-[4px]" viewBox="0 0 8 5"><path d="M4 0l4 5H0z" fill="#555" /></svg>
            </div>
          </div>
        </div>

        <!-- IME toolbar -->
        <div class="absolute left-[1096px] top-[1005px] w-[147px] h-[21px] flex items-center gap-[9px] pl-[6px] bg-[#f4f6f6] text-[13px] text-[#444] z-10">
          <span class="w-[15px] h-[15px] flex items-center justify-center border border-[#d8606a] bg-[#f8dcdc] text-[11px]">五</span>
          <span>中</span>
          <svg class="w-[12px] h-[13px]" viewBox="0 0 12 13"><path d="M9 0c3 6 0 12-8 12 4-1 7-5 8-12z" fill="#555" /></svg>
          <span class="text-[11px] leading-none">°,</span>
          <svg class="w-[14px] h-[10px]" viewBox="0 0 14 10"><path d="M.5.5h13v9H.5zM2 3h10M2 5h10M4 7h6" fill="none" stroke="#555" /></svg>
          <svg class="w-[11px] h-[13px]" viewBox="0 0 11 13"><circle cx="5.500" cy="3" r="3" fill="#555" /><path d="M0 13c0-5 3-6 5.500-6S11 8 11 13z" fill="#555" /></svg>
          <svg class="w-[12px] h-[13px]" viewBox="0 0 19 19"><path d="M1 18 11 7a5 5 0 0 1 7-5l-3 3 1 2 2 1 1-3a5 5 0 0 1-6 6L3 19z" fill="#555" /></svg>
        </div>
      </div>

      <!-- spreadsheet window -->
      <div class="flex-1 flex flex-col bg-[#f5f5f5] overflow-hidden border-t-[3px] border-[#1e3a5f] text-[18px] text-[#1f1f1f] whitespace-nowrap">
        <div class="h-[57px] flex items-end pb-[7px] bg-[#f2f3f5] shrink-0">
          <div class="w-[46px] h-[36px] flex items-center pl-[5px] bg-[#5b82ee] text-[14px] text-white rounded-tr-[4px]">页</div>
          <div class="ml-[4px] w-[252px] h-[40px] flex items-center bg-white border-t border-l border-[#d8d8d8] rounded-tl-[4px]">
            <span class="w-[20px] h-[20px] ml-[10px] flex items-center justify-center rounded-[2px] bg-[#1fb07a] text-[14px] font-bold text-white">S</span>
            <span class="ml-[9px] text-[15px] text-[#3e9a58]">【千秋雪老师CAD教程】.xlsx</span>
          </div>
        </div>
        <div class="h-[38px] flex items-center pb-[12px] bg-[#f7f7f7] text-[15px] shadow-[0_2px_3px_#0000001a] shrink-0">
          <span class="w-[30px] text-[#333]">文件</span>
          <div class="w-px h-[26px] ml-[13px] bg-[#e4e4e4]"></div>
          <svg class="w-[18px] h-[18px] ml-[10px]" viewBox="0 0 18 18"><path d="M1 1h13l3 3v13H1zM5 1v5h8V1M4 17v-6h10v6" fill="none" stroke="#555" stroke-width="1.300" /></svg>
          <svg class="w-[18px] h-[18px] ml-[11px]" viewBox="0 0 18 18"><path d="M0 6h9M6 3l3 3-3 3M10 1a5 5 0 0 1 4 9l-4 2v4M6 17a3 3 0 0 0 5-2" fill="none" stroke="#555" stroke-width="1.300" /></svg>
          <svg class="w-[18px] h-[18px] ml-[11px]" viewBox="0 0 18 18"><path d="M4 5V1h10v4M4 14H1V5h16v9h-3M4 10h10v7H4z" fill="none" stroke="#555" stroke-width="1.300" /></svg>
          <svg class="w-[19px] h-[18px] ml-[11px]" viewBox="0 0 19 18"><path d="M6 17H1V1h13v4" fill="none" stroke="#555" stroke-width="1.300" /><circle cx="10" cy="10" r="4.500" fill="none" stroke="#555" stroke-width="1.300" /><path d="M13 13l5 4" stroke="#555" stroke-width="1.300" /></svg>
          <svg class="w-[16px] h-[16px] ml-[12px]" viewBox="0 0 18 18"><path d="M5 3 1 7l4 4M1 7h10a4 4 0 0 1 0 9H7" fill="none" stroke="#c8c8c8" stroke-width="1.300" /></svg>
          <svg class="w-[16px] h-[16px] ml-[12px]" viewBox="0 0 18 18"><path d="M13 3l4 4-4 4M17 7H7a4 4 0 0 0 0 9h4" fill="none" stroke="#c8c8c8" stroke-width="1.300" /></svg>
          <svg class="w-[10px] h-[12px] ml-[18px]" viewBox="0 0 10 12"><path d="M0 1h10M0 5l5 5 5-5" fill="none" stroke="#666" stroke-width="1.300" /></svg>
          <div class="w-px h-[26px] ml-[12px] bg-[#e4e4e4]"></div>
          <div class="ml-[6px] w-[60px] h-[26px] shrink-0 flex items-center pl-[12px] rounded-l-[13px] bg-[#4aa34f] text-[14px] text-white font-bold">开始</div>
        </div>
        <div class="h-[55px] flex items-center bg-[#e9e9e9] text-[16px] shrink-0">
          <div class="w-[151px] h-[28px] flex items-center pl-[34px] bg-white rounded-r-[3px] [font-family:'Liberation_Serif',serif] text-[#444]">B390<svg class="w-[5px] h-[3px] ml-[72px]"><use href="#tri" /></svg></div>
          <svg class="w-[21px] h-[21px] ml-[54px]" viewBox="0 0 22 22"><circle cx="9" cy="9" r="7.500" fill="none" stroke="#555" stroke-width="1.200" /><path d="M14 14l7 7M6 7h6M6 10h6" stroke="#555" stroke-width="1.200" /></svg>
          <span class="ml-[10px] italic [font-family:'Liberation_Serif',serif] text-[22px] text-[#555]">fx</span>
          <div class="ml-[10px] flex-1 h-[28px] flex items-center pl-[14px] bg-white text-[#555]">连</div>
        </div>
        <div class="h-[25px] flex bg-[#ededed] text-[15px] text-[#777] shrink-0">
          <div class="w-[56px] flex items-center justify-center pb-[2px]">A</div>
          <div class="flex-1 bg-[#d0d0d0]"></div>
        </div>
        <div class="h-[14px] flex shrink-0">
          <div class="w-[55px] bg-white border-t border-[#dddddd]"></div>
          <div class="flex-1 border-2 border-[#4a9a4e]"></div>
        </div>
        <div class="flex-1 flex flex-col overflow-hidden">
          <div class="h-[58px] flex shrink-0"><div class="w-[56px] bg-white border-r border-b border-[#222]"></div><div class="flex-1 flex items-center pl-[3px] pb-[4px] border-b border-[#222]">基线标注</div></div>
          <div class="h-[58px] flex items-center justify-center shrink-0 bg-[#c0393e] border-b border-[#222] text-[23px] text-white">【 引线 】</div>
          <div class="h-[55px] flex shrink-0 text-white"><div class="w-[56px] flex items-center justify-center bg-[#3d60a0] border-r border-[#222] text-[21px]">1</div><div class="flex-1 flex items-center pl-[3px] bg-[#44546a]">类型</div></div>
          <div class="h-[56px] flex shrink-0"><div class="w-[56px] bg-white border-r border-b border-[#222]"></div><div class="flex-1 flex items-center pl-[3px] border-b border-[#222]">引线</div></div>
          <div class="h-[55px] flex shrink-0"><div class="w-[56px] bg-white border-r border-b border-[#222]"></div><div class="flex-1 flex items-center pl-[3px] border-b border-[#222]">添加引线</div></div>
          <div class="h-[55px] flex shrink-0"><div class="w-[56px] bg-white border-r border-b border-[#222]"></div><div class="flex-1 flex items-center pl-[3px] border-b border-[#222]">删除引线</div></div>
          <div class="h-[55px] flex shrink-0"><div class="w-[56px] bg-white border-r border-b border-[#222]"></div><div class="flex-1 flex items-center pl-[3px] border-b border-[#222]">对齐</div></div>
          <div class="h-[55px] flex shrink-0"><div class="w-[56px] bg-white border-r border-b border-[#222]"></div><div class="flex-1 flex items-center pl-[3px] border-b border-[#222]">合并</div></div>
          <div class="h-[55px] flex shrink-0 text-white"><div class="w-[56px] flex items-center justify-center bg-[#3d60a0] border-r border-[#222] text-[21px]">2</div><div class="flex-1 flex items-center pl-[3px] bg-[#44546a]">引线样式</div></div>
          <div class="h-[55px] flex shrink-0"><div class="w-[56px] bg-white border-r border-b border-[#222]"></div><div class="flex-1 flex items-center pl-[3px] border-b border-[#222]">引线格式</div></div>
          <div class="h-[55px] flex shrink-0"><div class="w-[56px] bg-white border-r border-b border-[#222]"></div><div class="flex-1 flex items-center pl-[3px] border-b border-[#222]">引线结构</div></div>
          <div class="h-[55px] flex shrink-0"><div class="w-[56px] bg-white border-r border-b border-[#222]"></div><div class="flex-1 flex items-center pl-[3px] border-b border-[#222]">内容</div></div>
          <div class="h-[63px] flex items-center justify-center shrink-0 bg-[#c0393e] border-b border-[#222] text-[23px] text-white">【 表格 】</div>
          <div class="h-[49px] flex shrink-0 text-white"><div class="w-[56px] flex items-center justify-center bg-[#3d60a0] border-r border-[#222] text-[21px]">1</div><div class="flex-1 flex items-center pl-[3px] pt-[4px] bg-[#44546a]">创建表格</div></div>
        </div>
        <div class="h-[27px] flex items-center bg-white text-[14px] shrink-0">
          <div class="w-[105px] h-full flex items-center pl-[9px] bg-[#ececec]">
            <svg class="w-[9px] h-[14px]" viewBox="0 0 9 14"><path d="M8 1 1 7l7 6" fill="none" stroke="#666" stroke-width="1.200" /></svg>
          </div>
          <div class="w-[81px] h-full flex items-center justify-center bg-[#d2d2d2] text-[#666]">2 绘图</div>
          <span class="ml-[20px] font-bold text-[#4a9a4e]">3 修改、文字、</span>
        </div>
        <div class="h-[32px] bg-[#f5f5f5] shrink-0"></div>
      </div>
    </div>

    <!-- taskbar -->
    <div class="relative h-[51px] flex items-center bg-gradient-to-r from-[#253543] to-[#1c2a40] text-white">
      <div class="absolute left-[10px] top-[1px] w-[40px] h-[39px] rounded-[8px] bg-[#6f7a80]/80"></div>
      <span class="absolute left-[58px] top-0 text-[38px] leading-[44px] font-bold text-[#7b858c]/80 [font-family:'Liberation_Sans',sans-serif]">tafe.cc</span>
      <svg class="relative w-[21px] h-[21px] ml-[20px]" viewBox="0 0 21 21"><path d="M0 3 9 1.700V10H0zM10 1.500 21 0v10H10zM0 11h9v8.300L0 18zM10 11h11v10L10 19.500z" fill="#fff" /></svg>
      <div class="relative ml-[38px] w-[30px] h-[30px] flex items-center justify-center rounded-[3px] bg-[#46a30e]">
        <div class="w-[16px] h-[20px] border-[4px] border-r-0 border-[#d8eec8]"></div>
      </div>
      <div class="relative ml-[17px] w-[61px] h-[48px] flex items-center justify-center self-start mt-[1px] bg-[#41515f]/90">
        <div class="w-[30px] h-[30px] flex items-center justify-center bg-[#e2e2e2]"><span class="text-[26px] leading-none font-bold text-[#b53a44] [font-family:'Liberation_Sans',sans-serif]">A</span></div>
      </div>
      <div class="relative ml-[18px] w-[26px] h-[27px] flex items-center justify-center rounded-[5px] bg-[#1c7fe8] text-[15px] font-bold">W</div>
      <div class="relative ml-[34px] w-[30px] h-[30px] flex items-center justify-center rounded-[3px] bg-[#f04a30]">
        <div class="w-[14px] h-[20px] border-[4px] border-r-0 border-white"></div>
      </div>
      <div class="absolute left-[68px] bottom-0 w-[52px] h-[3px] bg-[#6aa8d8]"></div>
      <div class="absolute left-[126px] bottom-0 w-[61px] h-[3px] bg-[#6aa8d8]"></div>
      <div class="absolute left-[193px] bottom-0 w-[51px] h-[3px] bg-[#6aa8d8]"></div>
      <div class="absolute left-[255px] bottom-0 w-[51px] h-[3px] bg-[#6aa8d8]"></div>
      <!-- tray -->
      <div class="ml-auto flex items-center text-[16px]">
        <svg class="w-[17px] h-[10px]" viewBox="0 0 17 10"><path d="M1 9l7.500-8L16 9" fill="none" stroke="#fff" stroke-width="1.200" /></svg>
        <svg class="w-[14px] h-[22px] ml-[13px]" viewBox="0 0 14 22"><rect x="3" y="0" width="8" height="14" rx="4" fill="#fff" /><path d="M1 10a6 6 0 0 0 12 0M7 16v4M3 21h8" fill="none" stroke="#fff" /></svg>
        <svg class="w-[19px] h-[21px] ml-[15px]" viewBox="0 0 19 21"><path d="M9.500 0 19 3v8c0 5-5 8-9.500 10C5 19 0 16 0 11V3z" fill="#3f8ce8" /><path d="M4 7h11l-5.500 6z" fill="none" stroke="#fff" stroke-width="2" /></svg>
        <svg class="w-[20px] h-[18px] ml-[11px]" viewBox="0 0 20 18"><path d="M4 2h15v12H1V5M10 14v3M6 17h8" fill="none" stroke="#fff" /><rect x=".5" y=".5" width="4" height="4" fill="none" stroke="#fff" /></svg>
        <svg class="w-[20px] h-[16px] ml-[9px]" viewBox="0 0 20 16"><path d="M1 5h3l4-4v14l-4-4H1z" fill="none" stroke="#fff" /><path d="M11 4a5 5 0 0 1 0 8M14 2a8 8 0 0 1 0 12M17 0a11 11 0 0 1 0 16" fill="none" stroke="#8a94a0" /></svg>
        <span class="ml-[12px] w-[16px]">中</span>
        <div class="ml-[11px] w-[20px] h-[20px] flex items-center justify-center rounded-[3px] bg-[#2e8ce6] text-[13px] font-bold">五</div>
        <svg class="w-[20px] h-[18px] ml-[28px] mr-[31px]" viewBox="0 0 20 18"><path d="M.5.5h19v14H12l-2 3-2-3H.5z" fill="none" stroke="#fff" /></svg>
      </div>
    </div>
  </body>
</html>
